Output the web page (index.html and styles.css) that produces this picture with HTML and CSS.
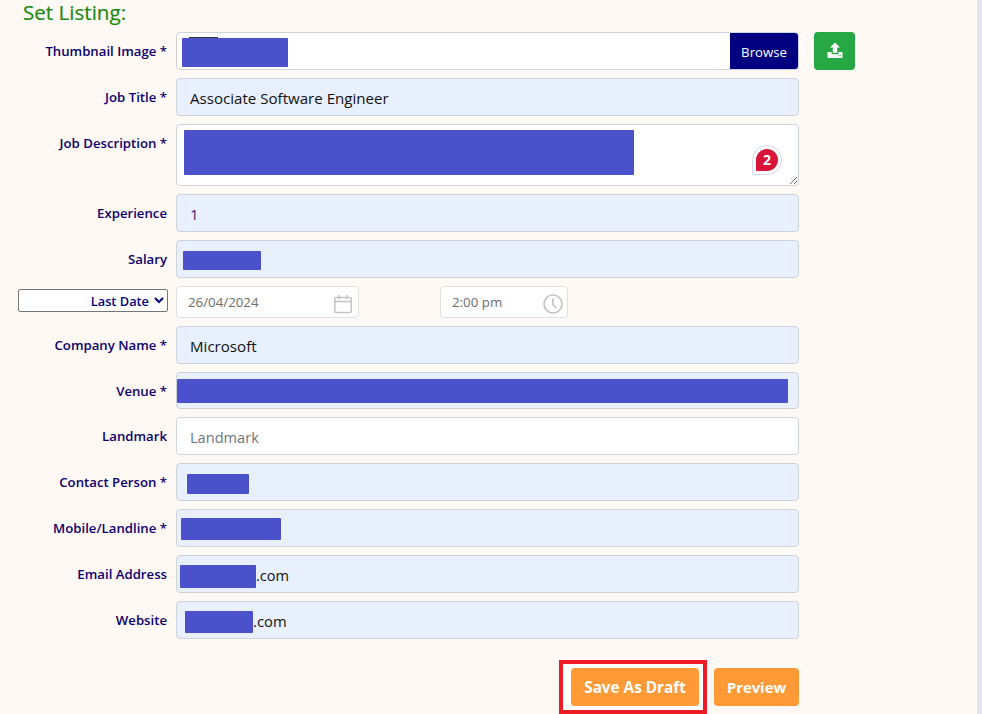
FILE: index.html
```html
<!DOCTYPE html>
<html lang="en">
<head>
<meta charset="utf-8">
<title>Set Listing</title>
<link rel="stylesheet" href="styles.css">
</head>
<body>
<div class="page">
  <main class="content">
    <h2 class="title">Set Listing:</h2>
    <form class="form">
      <div class="row">
        <label class="label">Thumbnail Image *</label>
        <div class="field file">
          <span class="file-name"></span>
          <span class="browse">Browse</span>
          <i class="sliver"></i>
          <i class="redact r-thumb"></i>
        </div>
        <button type="button" class="upload" aria-label="Upload">
          <svg width="16" height="17" viewBox="0 0 16 17"><path fill="#fff" d="M8 0.5 13 5.6H10.2V10.8H5.8V5.6H3Z"/><path fill="#fff" d="M0.5 10H4.6V11.4Q4.6 12.2 5.4 12.2H10.6Q11.4 12.2 11.4 11.4V10H15.5V15.2Q15.5 16 14.7 16H1.3Q0.5 16 0.5 15.2Z"/><path fill="#28a745" d="M11 13.3H12V14.3H11ZM13 13.3H14V14.3H13Z"/></svg>
        </button>
      </div>
      <div class="row">
        <label class="label">Job Title *</label>
        <div class="field"><input class="input" value="Associate Software Engineer"></div>
      </div>
      <div class="row">
        <label class="label">Job Description *</label>
        <div class="field"><textarea class="input area"></textarea>
          <i class="redact r-desc"></i>
          <span class="badge-wrap"><span class="badge">2</span></span>
        </div>
      </div>
      <div class="row">
        <label class="label">Experience</label>
        <div class="field"><input class="input purple" value="1"></div>
      </div>
      <div class="row">
        <label class="label">Salary</label>
        <div class="field"><input class="input"><i class="redact r-salary"></i></div>
      </div>
      <div class="row row-date">
        <select class="date-select"><option>Last Date</option></select>
        <div class="date-fields">
          <div class="small-field date-box"><span>26/04/2024</span>
            <svg width="20" height="20" viewBox="0 0 20 20" fill="none" stroke="#c4c4c4" stroke-width="1.5"><rect x="1.8" y="3.5" width="16.4" height="15" rx="1"/><path d="M1.8 7.5H18.2M6 1V5M14 1V5"/></svg>
          </div>
          <div class="small-field time-box"><span>2:00 pm</span>
            <svg width="22" height="22" viewBox="0 0 22 22" fill="none" stroke="#c4c4c4" stroke-width="1.7"><circle cx="11" cy="11" r="9"/><path d="M11 5.5V11.5L14 15"/></svg>
          </div>
        </div>
      </div>
      <div class="row">
        <label class="label">Company Name *</label>
        <div class="field"><input class="input" value="Microsoft"></div>
      </div>
      <div class="row">
        <label class="label">Venue *</label>
        <div class="field"><input class="input venue"><i class="redact r-venue"></i></div>
      </div>
      <div class="row">
        <label class="label">Landmark</label>
        <div class="field"><input class="input plain" placeholder="Landmark"></div>
      </div>
      <div class="row">
        <label class="label">Contact Person *</label>
        <div class="field"><input class="input"><i class="redact r-contact"></i></div>
      </div>
      <div class="row">
        <label class="label">Mobile/Landline *</label>
        <div class="field"><input class="input"><i class="redact r-mobile"></i></div>
      </div>
      <div class="row">
        <label class="label">Email Address</label>
        <div class="field"><input class="input indent-email" value=".com"><i class="redact r-email"></i></div>
      </div>
      <div class="row">
        <label class="label">Website</label>
        <div class="field"><input class="input indent-web" value=".com"><i class="redact r-web"></i></div>
      </div>
      <div class="actions">
        <div class="highlight"><button type="button" class="btn">Save As Draft</button></div>
        <button type="button" class="btn preview">Preview</button>
      </div>
    </form>
  </main>
  <div class="scrollbar"></div>
</div>
</body>
</html>
```
FILE: styles.css
```css
* { box-sizing: border-box; }
html, body { margin: 0; height: 100%; overflow: hidden; }
body { background: #fff9f5; font-family: "Open Sans", "Noto Sans", sans-serif; color: #212529; }
.page { display: flex; height: 714px; }
.content { flex: 1; min-width: 0; padding-left: 18px; }
.title { margin: 0; padding: 0 0 0 5px; height: 32px; font-size: 20.6px; line-height: 24px; font-weight: 400; color: #1a8a0f; -webkit-text-stroke: 0.2px #1a8a0f; }
.form { display: flex; flex-direction: column; gap: 8px; width: 781px; }
.row { display: flex; align-items: flex-start; gap: 9px; }
.label { width: 149px; flex: none; text-align: right; padding-top: 10px; font-size: 13.2px; line-height: 18px; font-weight: 600; color: #0c0070; white-space: nowrap; }
.field { position: relative; flex: none; width: 623px; }
.input { display: block; width: 100%; height: 38px; padding: 2px 13px 0; border: 1px solid #ced4da; border-radius: 4px; background: #e8f0fe; font: 15.1px "Open Sans", "Noto Sans", sans-serif; color: #111; outline: none; }
.input.venue { height: 37px; }
.input.area { height: 62px; background: #fff; resize: vertical; }
.input.purple { color: #3b1a6b; }
.input.plain { background: #fff; font-size: 14.6px; }
.input.plain::placeholder { color: #6c757d; opacity: 1; }
.input.indent-email { padding-left: 79px; font-size: 14.6px; }
.input.indent-web { padding-left: 76px; font-size: 14.8px; }
.file { display: flex; height: 38px; border: 1px solid #ced4da; border-radius: 4px; background: #fff; overflow: hidden; }
.file-name { flex: 1; }
.browse { width: 68px; background: #000080; color: #fff; font-size: 13.2px; padding-top: 1px; display: flex; align-items: center; justify-content: center; }
.upload { margin-left: 6px; flex: none; width: 41px; height: 38px; border: 0; border-radius: 4px; background: #28a745; display: flex; align-items: center; justify-content: center; padding: 0 0 1px; }
.sliver { position: absolute; left: 12px; top: 4px; width: 29px; height: 1px; background: #3a3035; }
.redact { position: absolute; display: block; background: #4b50cb; border-radius: 1px; }
.r-thumb { left: 5px; top: 5px; width: 106px; height: 29px; }
.r-desc { left: 8px; top: 6px; width: 450px; height: 45px; }
.r-salary { left: 7px; top: 11px; width: 78px; height: 19px; }
.r-venue { left: 1px; top: 7px; width: 611px; height: 24px; }
.r-contact { left: 11px; top: 11px; width: 62px; height: 20px; }
.r-mobile { left: 5px; top: 9px; width: 100px; height: 22px; }
.r-email { left: 4px; top: 10px; width: 76px; height: 23px; }
.r-web { left: 9px; top: 10px; width: 68px; height: 22px; }
.badge-wrap { position: absolute; left: 576px; top: 21px; width: 30px; height: 30px; padding: 3px; background: #fff; border: 1px solid #d6d6e4; border-radius: 50% 50% 50% 0; }
.badge { display: flex; width: 100%; height: 100%; align-items: center; justify-content: center; background: #d81538; color: #fff; border-radius: 50% 50% 50% 0; font-size: 14px; font-weight: 700; line-height: 1; }
.row-date { height: 32px; align-items: center; gap: 8px; }
.date-select { width: 150px; height: 23px; flex: none; margin-top: -3px; padding: 0 2px 0 0; border: 1px solid #767676; border-radius: 2px; background: #fff; color: #000080; font: 600 12.8px "Open Sans", "Noto Sans", sans-serif; text-align: right; }
.date-fields { display: flex; gap: 81px; }
.small-field { height: 32px; display: flex; align-items: center; justify-content: space-between; border: 1px solid #e0e0e0; border-radius: 4px; background: #fff; font-size: 13.3px; color: #6c6c6c; padding-left: 11px; }
.date-box { width: 183px; padding-right: 5px; }
.time-box { width: 128px; padding-right: 3px; }
.time-box svg { margin-top: 4px; }
.date-box svg { margin-top: 3px; }
.actions { display: flex; justify-content: flex-end; align-items: flex-start; gap: 7px; margin-top: 13px; }
.highlight { border: 4px solid #ed1c24; padding: 4px 4px 4px 8px; background: #fff; }
.btn { display: block; height: 38px; width: 128px; padding: 0; border: 0; border-radius: 4px; background: #ff9a36; color: #fff; font: 700 15.3px "Open Sans", "Noto Sans", sans-serif; }
.btn.preview { width: 85px; margin-top: 8px; font-size: 14.8px; }
.scrollbar { width: 5px; flex: none; background: #e4e4f0; }
```
